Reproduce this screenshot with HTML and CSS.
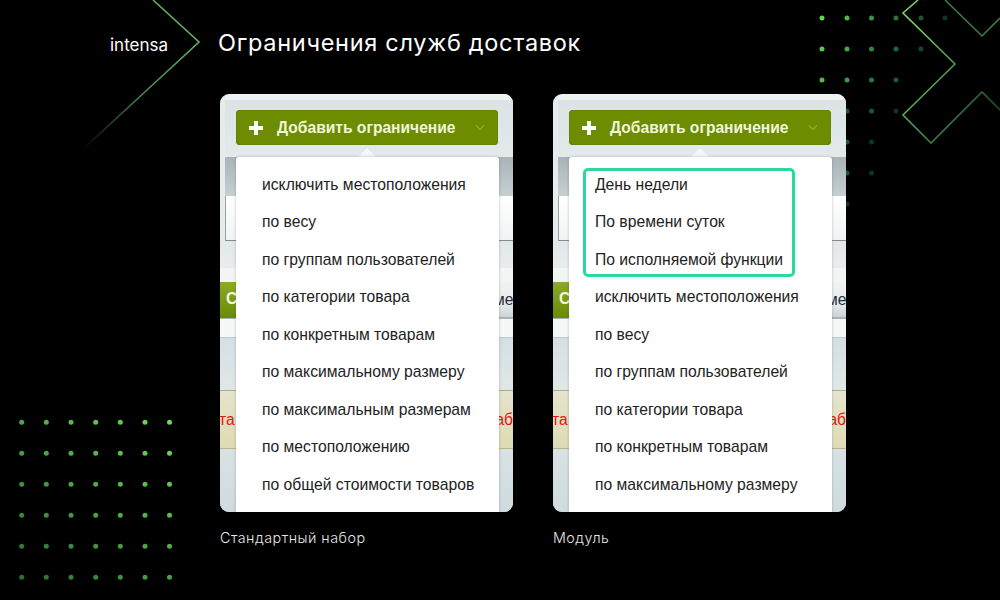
FILE: index.html
```html
<!DOCTYPE html>
<html lang="ru">
<head>
  <meta charset="UTF-8">
  <title>Ограничения служб доставок</title>
  <link rel="stylesheet" href="styles.css">
</head>
<body>
  <svg class="decor" width="1000" height="600" viewBox="0 0 1000 600" fill="none">
    <defs>
      <linearGradient id="chevronLine" gradientUnits="userSpaceOnUse" x1="199" y1="42" x2="82" y2="150">
        <stop offset="0" stop-color="#62b064"/>
        <stop offset="0.5" stop-color="#44874c"/>
        <stop offset="1" stop-color="#000"/>
      </linearGradient>
      <linearGradient id="crossLine" gradientUnits="userSpaceOnUse" x1="905" y1="40" x2="1000" y2="100">
        <stop offset="0" stop-color="#78d268"/>
        <stop offset="0.5" stop-color="#4a9454"/>
        <stop offset="1" stop-color="#1f4a2a"/>
      </linearGradient>
      <linearGradient id="dotsLeft" gradientUnits="userSpaceOnUse" x1="170" y1="422" x2="21" y2="577">
        <stop offset="0" stop-color="#6fdc58"/>
        <stop offset="1" stop-color="#2a6e34"/>
      </linearGradient>
      <linearGradient id="dotsRight" gradientUnits="userSpaceOnUse" x1="822" y1="18" x2="945" y2="60">
        <stop offset="0" stop-color="#66d455"/>
        <stop offset="0.6" stop-color="#1f6a38"/>
        <stop offset="1" stop-color="#07251a"/>
      </linearGradient>
    </defs>
    <polyline points="153,0 199,42 82,150" stroke="url(#chevronLine)" stroke-width="1.6"/>
    <polyline points="918,0 903,13 955,64 903,115 931,143 982,92 1000,110" stroke="url(#crossLine)" stroke-width="1.6"/>
    <polyline points="945,0 982,36 1000,18" stroke="#3c7a48" stroke-width="1.6"/>
    <g fill="url(#dotsRight)">
      <circle cx="822" cy="18" r="2.5"/><circle cx="847" cy="18" r="2.5"/><circle cx="871.5" cy="18" r="2.5"/><circle cx="896" cy="18" r="2.5"/><circle cx="921" cy="18" r="2.5"/><circle cx="945" cy="18" r="2.5"/>
      <circle cx="822" cy="49" r="2.5"/><circle cx="847" cy="49" r="2.5"/><circle cx="871.5" cy="49" r="2.5"/><circle cx="896" cy="49" r="2.5"/><circle cx="921" cy="49" r="2.5"/>
      <circle cx="822" cy="80" r="2.5"/><circle cx="847" cy="80" r="2.5"/><circle cx="871.5" cy="80" r="2.5"/><circle cx="896" cy="80" r="2.5"/>
    </g>
    <g fill="#17583a">
      <circle cx="847" cy="111" r="2.5"/><circle cx="871.5" cy="111" r="2.5"/>
      <circle cx="847" cy="142" r="2.5"/>
      <circle cx="847" cy="173" r="2.5"/>
    </g>
    <g fill="#0d3425">
      <circle cx="896" cy="111" r="2.5"/>
      <circle cx="871.5" cy="142" r="2.5"/>
      <circle cx="871.5" cy="173" r="2.5"/>
      <circle cx="847" cy="204" r="2.5"/>
    </g>
    <g fill="url(#dotsLeft)">
      <circle cx="21.7" cy="422.3" r="2.5"/><circle cx="46.3" cy="422.3" r="2.5"/><circle cx="71" cy="422.3" r="2.5"/><circle cx="95.7" cy="422.3" r="2.5"/><circle cx="120.3" cy="422.3" r="2.5"/><circle cx="145" cy="422.3" r="2.5"/><circle cx="169.5" cy="422.3" r="2.5"/>
      <circle cx="21.7" cy="453.3" r="2.5"/><circle cx="46.3" cy="453.3" r="2.5"/><circle cx="71" cy="453.3" r="2.5"/><circle cx="95.7" cy="453.3" r="2.5"/><circle cx="120.3" cy="453.3" r="2.5"/><circle cx="145" cy="453.3" r="2.5"/><circle cx="169.5" cy="453.3" r="2.5"/>
      <circle cx="21.7" cy="484.3" r="2.5"/><circle cx="46.3" cy="484.3" r="2.5"/><circle cx="71" cy="484.3" r="2.5"/><circle cx="95.7" cy="484.3" r="2.5"/><circle cx="120.3" cy="484.3" r="2.5"/><circle cx="145" cy="484.3" r="2.5"/><circle cx="169.5" cy="484.3" r="2.5"/>
      <circle cx="21.7" cy="515.3" r="2.5"/><circle cx="46.3" cy="515.3" r="2.5"/><circle cx="71" cy="515.3" r="2.5"/><circle cx="95.7" cy="515.3" r="2.5"/><circle cx="120.3" cy="515.3" r="2.5"/><circle cx="145" cy="515.3" r="2.5"/><circle cx="169.5" cy="515.3" r="2.5"/>
      <circle cx="21.7" cy="546.3" r="2.5"/><circle cx="46.3" cy="546.3" r="2.5"/><circle cx="71" cy="546.3" r="2.5"/><circle cx="95.7" cy="546.3" r="2.5"/><circle cx="120.3" cy="546.3" r="2.5"/><circle cx="145" cy="546.3" r="2.5"/><circle cx="169.5" cy="546.3" r="2.5"/>
      <circle cx="21.7" cy="577.3" r="2.5"/><circle cx="46.3" cy="577.3" r="2.5"/><circle cx="71" cy="577.3" r="2.5"/><circle cx="95.7" cy="577.3" r="2.5"/><circle cx="120.3" cy="577.3" r="2.5"/><circle cx="145" cy="577.3" r="2.5"/><circle cx="169.5" cy="577.3" r="2.5"/>
    </g>
  </svg>

  <header class="top">
    <span class="logo">intensa</span>
    <h1 class="title">Ограничения служб доставок</h1>
  </header>

  <main class="compare">
    <figure class="variant">
      <div class="shot">
        <div class="toolbar">
          <div class="add-btn">
            <svg class="plus" width="14" height="14" viewBox="0 0 14 14"><path d="M5 0h4v5h5v4H9v5H5V9H0V5h5z" fill="#fff"/></svg>
            <span class="add-label">Добавить ограничение</span>
            <svg class="chevron" width="10" height="7" viewBox="0 0 10 7" fill="none"><path d="M1 1.5l4 4 4-4" stroke="#8fa83c" stroke-width="1.3"/></svg>
          </div>
        </div>
        <div class="strip-head"></div>
        <div class="strip-input"></div>
        <div class="strip-light"></div>
        <div class="strip-buttons"><span class="green-btn">С</span><span class="grey-text">мен</span></div>
        <div class="strip-white"></div>
        <div class="strip-blue"></div>
        <div class="strip-warn"><span class="warn-left">та</span><span>аб</span></div>
        <div class="strip-blue strip-end"></div>
        <span class="arrow"></span>
        <ul class="menu">
          <li>исключить местоположения</li>
          <li>по весу</li>
          <li>по группам пользователей</li>
          <li>по категории товара</li>
          <li>по конкретным товарам</li>
          <li>по максимальному размеру</li>
          <li>по максимальным размерам</li>
          <li>по местоположению</li>
          <li>по общей стоимости товаров</li>
        </ul>
      </div>
      <figcaption class="caption">Стандартный набор</figcaption>
    </figure>

    <figure class="variant">
      <div class="shot">
        <div class="toolbar">
          <div class="add-btn">
            <svg class="plus" width="14" height="14" viewBox="0 0 14 14"><path d="M5 0h4v5h5v4H9v5H5V9H0V5h5z" fill="#fff"/></svg>
            <span class="add-label">Добавить ограничение</span>
            <svg class="chevron" width="10" height="7" viewBox="0 0 10 7" fill="none"><path d="M1 1.5l4 4 4-4" stroke="#8fa83c" stroke-width="1.3"/></svg>
          </div>
        </div>
        <div class="strip-head"></div>
        <div class="strip-input"></div>
        <div class="strip-light"></div>
        <div class="strip-buttons"><span class="green-btn">С</span><span class="grey-text">мен</span></div>
        <div class="strip-white"></div>
        <div class="strip-blue"></div>
        <div class="strip-warn"><span class="warn-left">та</span><span>аб</span></div>
        <div class="strip-blue strip-end"></div>
        <span class="arrow"></span>
        <ul class="menu">
          <li>День недели</li>
          <li>По времени суток</li>
          <li>По исполняемой функции</li>
          <li>исключить местоположения</li>
          <li>по весу</li>
          <li>по группам пользователей</li>
          <li>по категории товара</li>
          <li>по конкретным товарам</li>
          <li>по максимальному размеру</li>
        </ul>
        <span class="highlight"></span>
      </div>
      <figcaption class="caption">Модуль</figcaption>
    </figure>
  </main>
</body>
</html>
```

FILE: styles.css
```css
body {
  margin: 0;
  width: 1000px;
  height: 600px;
  overflow: hidden;
  background: #000;
  color: #fff;
  font-family: "Inter", sans-serif;
}

.decor {
  position: absolute;
  left: 0;
  top: 0;
}

.top {
  position: relative;
  display: flex;
  align-items: center;
  height: 94px;
  padding-left: 110px;
  padding-bottom: 8px;
  box-sizing: border-box;
}
.logo {
  width: 108px;
  font-size: 17px;
  padding-top: 4px;
}
.title {
  margin: 0;
  font-size: 23.5px;
  font-weight: 400;
  letter-spacing: 0.7px;
  padding-bottom: 2px;
}

.compare {
  position: relative;
  display: flex;
  gap: 40px;
  padding-left: 220px;
}
.variant {
  margin: 0;
  width: 293px;
}
.caption {
  margin-top: 17px;
  font-size: 14.3px;
  font-weight: 300;
  letter-spacing: 0.5px;
  color: #e8e8e8;
}

.shot {
  position: relative;
  height: 418px;
  overflow: hidden;
  border-radius: 9px;
  background: #e6ebec;
  font-family: "Liberation Sans", Arial, sans-serif;
}

.toolbar {
  height: 63px;
  box-sizing: border-box;
  padding: 10px 15px 0 11px;
  margin-left: 5px;
  border-top: 6px solid #eef2f2;
  border-top-left-radius: 5px;
  background: linear-gradient(#dbe3e5, #e4eaeb);
}
.add-btn {
  display: flex;
  align-items: center;
  height: 35px;
  box-sizing: border-box;
  padding: 0 13px;
  background: #6d8c00;
  border-radius: 4px;
  box-shadow: inset 0 0 0 1px #65820a;
}
.plus {
  margin-right: 14px;
}
.add-label {
  font-size: 15.6px;
  font-weight: bold;
  color: #f1f5dc;
}
.chevron {
  margin-left: auto;
}

.strip-head {
  height: 39px;
  margin-left: 5px;
  background: linear-gradient(#a8b4b7, #c6cfd1);
}
.strip-input {
  height: 45px;
  margin-left: 5px;
  background: linear-gradient(#fff, #f2f3f4);
  border-left: 1px solid #9aa0a2;
  border-bottom: 1px solid #858b8d;
  box-sizing: border-box;
}
.strip-light {
  height: 42px;
  background: linear-gradient(#e2e7e8 0, #e9edee 26px, #d9dedf 26px, #f4f6f6 27px, #f2f4f4 100%);
}
.strip-buttons {
  display: flex;
  justify-content: space-between;
  align-items: center;
  height: 36px;
  background: linear-gradient(#f0f2f2, #e8ecee 60%, #ccd4d7);
  border-bottom: 2px solid #a9b2b5;
  box-sizing: border-box;
}
.green-btn {
  width: 16px;
  height: 36px;
  padding-left: 6px;
  box-sizing: border-box;
  line-height: 34px;
  font-size: 15.6px;
  font-weight: bold;
  color: #f3f7e2;
  background: linear-gradient(#8aab22, #6b8a06);
}
.grey-text {
  font-size: 15.6px;
  color: #1f2c3a;
  margin-right: -9px;
}
.strip-white {
  height: 19px;
  background: #f6f7f7;
  border-bottom: 1px solid #c3c8c8;
  box-sizing: border-box;
}
.strip-blue {
  height: 52px;
  background: linear-gradient(#d5dfe3, #e0e7e7);
}
.strip-warn {
  display: flex;
  justify-content: space-between;
  align-items: center;
  height: 59px;
  box-sizing: border-box;
  background: linear-gradient(#e5e4cc, #dedbb4);
  border-top: 1px solid #b0ab84;
  border-bottom: 1px solid #b8b48c;
  font-size: 15.6px;
  color: #e81212;
}
.warn-left {
  margin-left: -1px;
}
.strip-end {
  height: 63px;
  background: linear-gradient(#d8e2e4, #cfdbdd);
}

.arrow {
  position: absolute;
  left: 138px;
  top: 54px;
  width: 0;
  height: 0;
  border-left: 9px solid transparent;
  border-right: 9px solid transparent;
  border-bottom: 9px solid #f6f8f8;
}
.menu {
  position: absolute;
  left: 16px;
  top: 63px;
  width: 263px;
  height: 355px;
  margin: 0;
  padding: 8.6px 0 0;
  box-sizing: border-box;
  list-style: none;
  background: #fff;
  border-radius: 3px 3px 0 0;
  box-shadow: 0 0 3px rgba(60, 80, 90, 0.35);
}
.menu li {
  height: 37.5px;
  line-height: 37.5px;
  padding-left: 26px;
  font-size: 15.7px;
  color: #222;
  white-space: nowrap;
}
.highlight {
  position: absolute;
  left: 30px;
  top: 74px;
  width: 212px;
  height: 109px;
  box-sizing: border-box;
  border: 3px solid #2bd9a0;
  border-radius: 5px;
}
```
